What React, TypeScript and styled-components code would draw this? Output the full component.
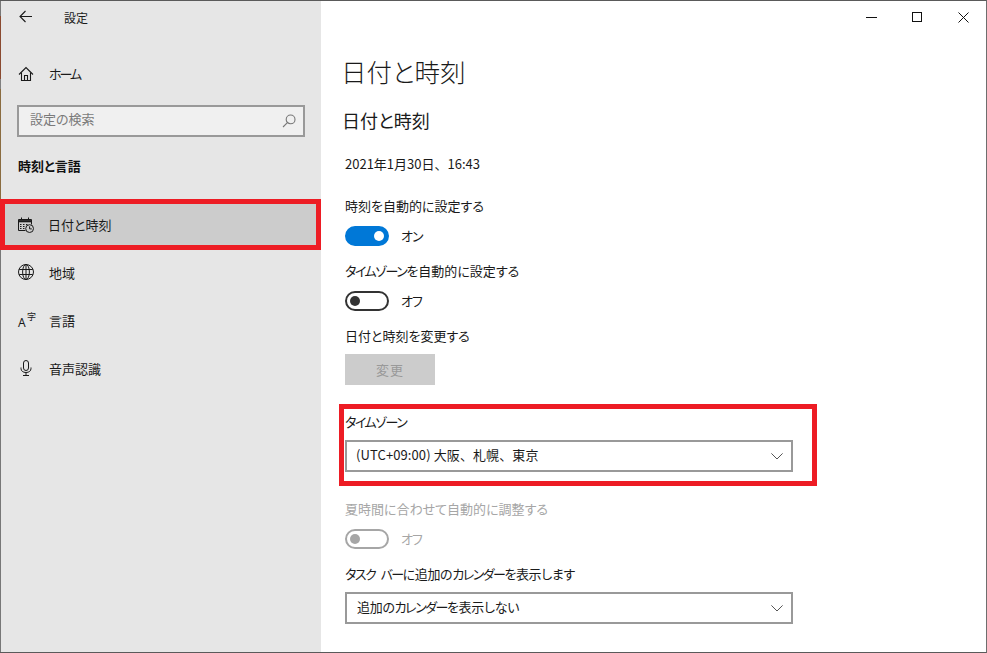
import React from 'react';
import styled, { createGlobalStyle } from 'styled-components';

const GlobalStyle = createGlobalStyle`
  html, body {
    margin: 0;
    padding: 0;
    background: #fff;
    overflow: hidden;
  }
  body {
    font-family: "Noto Sans CJK JP", "Noto Sans", sans-serif;
    font-feature-settings: "palt";
    color: #1a1a1a;
  }
`;

const Window = styled.div`
  width: 987px;
  height: 653px;
  box-sizing: border-box;
  display: flex;
  padding-left: 1px;
  border-top: 1px solid #5a5a5a;
  border-bottom: 1px solid #5a5a5a;
  border-right: 1px solid #6e6e6e;
  overflow: hidden;
  background: linear-gradient(
    #777 0 15px,
    #8a4a30 15px 78px,
    #808080 78px 88px,
    #8a6c40 88px 236px,
    #777 236px
  );
`;

const Sidebar = styled.aside`
  width: 320px;
  flex-shrink: 0;
  background: #e6e6e6;
  display: flex;
  flex-direction: column;
`;

const TitleBar = styled.div`
  height: 32px;
  display: flex;
  align-items: center;
  padding-left: 17px;
  font-size: 12px;
  svg { margin-right: 32px; }
`;

const HomeRow = styled.div`
  height: 48px;
  margin-top: 16px;
  display: flex;
  align-items: center;
  padding-left: 17px;
  font-size: 13px;
  letter-spacing: -2px;
  svg { margin: 2px 15px 0 0; }
`;

const SearchBox = styled.div`
  margin: 8px 16px 0 16px;
  height: 32px;
  box-sizing: border-box;
  border: 2px solid #999;
  background: #f0f0f0;
  display: flex;
  align-items: center;
  justify-content: space-between;
  padding: 0 7px 0 11px;
  font-size: 13px;
  color: #7a7a7a;
`;

const SearchText = styled.span`
  margin-top: -5px;
`;

const SectionName = styled.div`
  margin: 19px 0 0 17px;
  height: 20px;
  line-height: 20px;
  font-size: 13px;
  font-weight: 700;
  color: #111;
`;

const NavList = styled.nav`
  margin-top: 23px;
  display: flex;
  flex-direction: column;
`;

const NavRow = styled.div<{ $selected?: boolean }>`
  box-sizing: border-box;
  height: ${p => (p.$selected ? '51px' : '48px')};
  margin-left: ${p => (p.$selected ? '-1px' : '0')};
  margin-bottom: ${p => (p.$selected ? '-2px' : '0')};
  display: flex;
  align-items: center;
  font-size: 13px;
  padding-left: ${p => (p.$selected ? '13px' : '17px')};
  background: ${p => (p.$selected ? '#cccccc' : 'transparent')};
  border: ${p => (p.$selected ? '5px solid #ed1c24' : 'none')};
  flex-shrink: 0;
`;

const NavIcon = styled.span<{ $gap?: number }>`
  width: 16px;
  height: 16px;
  margin-right: ${p => p.$gap ?? 15}px;
  display: flex;
  align-items: center;
  justify-content: center;
`;

const LangIcon = styled.span`
  position: relative;
  width: 16px;
  height: 16px;
  display: block;
  & > b {
    position: absolute;
    left: 0;
    bottom: 0;
    font-weight: 400;
    font-family: "Noto Sans", sans-serif;
    font-size: 12px;
    line-height: 11px;
  }
  & > i {
    position: absolute;
    right: -2px;
    top: 0;
    font-style: normal;
    font-size: 9px;
    line-height: 9px;
  }
`;

const Main = styled.main`
  flex: 1;
  position: relative;
  background: #fff;
  padding-left: 24px;
  display: flex;
  flex-direction: column;
`;

const WindowButtons = styled.div`
  position: absolute;
  top: 0;
  right: 0;
  height: 32px;
  display: flex;
`;

const WindowButton = styled.div`
  width: 46px;
  height: 32px;
  display: flex;
  align-items: center;
  justify-content: center;
  color: #111;
`;

const PageTitle = styled.h1`
  margin: 50px 0 0 -4px;
  height: 40px;
  line-height: 40px;
  font-size: 25.5px;
  font-weight: 300;
`;

const SubTitle = styled.h2`
  margin: 14px 0 0 -3px;
  height: 30px;
  line-height: 30px;
  font-size: 18px;
  font-weight: 400;
`;

const Line = styled.div<{ $top: number; $muted?: boolean; $plain?: boolean; $tight?: boolean }>`
  margin-top: ${p => p.$top}px;
  height: 20px;
  line-height: 20px;
  font-size: 13px;
  color: ${p => (p.$muted ? '#a6a6a6' : '#1a1a1a')};
  white-space: nowrap;
  ${p => (p.$plain ? 'font-feature-settings: normal;' : '')}
  ${p => (p.$tight ? 'letter-spacing: -0.4px; word-spacing: 4px;' : '')}
`;

// katakana is set much narrower in the original than in the fallback font
const Kana = styled.span`
  letter-spacing: -1.5px;
`;

const ToggleRow = styled.div<{ $top: number }>`
  margin-top: ${p => p.$top}px;
  display: flex;
  align-items: center;
  gap: 12px;
  height: 20px;
`;

const Track = styled.div<{ $on?: boolean; $disabled?: boolean }>`
  position: relative;
  width: 44px;
  height: 20px;
  box-sizing: border-box;
  border-radius: 10px;
  background: ${p => (p.$on ? '#0078d7' : 'transparent')};
  border: 2px solid ${p => (p.$on ? '#0078d7' : p.$disabled ? '#a6a6a6' : '#333')};
  &::after {
    content: '';
    position: absolute;
    top: 3px;
    width: 10px;
    height: 10px;
    border-radius: 50%;
    ${p => (p.$on ? 'right: 3px;' : 'left: 3px;')}
    background: ${p => (p.$on ? '#fff' : p.$disabled ? '#a6a6a6' : '#333')};
  }
`;

const ToggleLabel = styled.span<{ $muted?: boolean }>`
  font-size: 13px;
  letter-spacing: -1px;
  margin-top: -2px;
  color: ${p => (p.$muted ? '#a6a6a6' : '#1a1a1a')};
`;

const ChangeButton = styled.div`
  margin-top: 8px;
  width: 90px;
  height: 31px;
  background: #cccccc;
  color: #999;
  font-size: 13px;
  letter-spacing: 1px;
  display: flex;
  align-items: center;
  justify-content: center;
`;

const Highlight = styled.section`
  margin: 19px 0 0 -6px;
  width: 478px;
  height: 82px;
  box-sizing: border-box;
  border: 5px solid #ed1c24;
  padding: 3px 0 0 1px;
  flex-shrink: 0;
`;

const FieldLabel = styled.div`
  height: 20px;
  line-height: 20px;
  font-size: 13px;
`;

const Select = styled.div<{ $top: number; $plain?: boolean }>`
  margin-top: ${p => p.$top}px;
  width: 448px;
  height: 32px;
  box-sizing: border-box;
  border: 2px solid #999;
  background: #fff;
  display: flex;
  align-items: center;
  justify-content: space-between;
  padding: 0 8px 0 ${p => (p.$plain ? 9 : 10)}px;
  font-size: 13px;
  flex-shrink: 0;
  ${p => (p.$plain ? 'font-feature-settings: normal; letter-spacing: 0.1px;' : 'letter-spacing: -0.3px;')}
`;

const SelectText = styled.span`
  margin-top: -4px;
`;

const BackIcon = () => (
  <svg width="14" height="14" viewBox="0 0 14 14" fill="none" stroke="#1a1a1a" strokeWidth="1.1">
    <path d="M2 6.5H14M7.5 1L2 6.5L7.5 12" />
  </svg>
);

const HomeIcon = () => (
  <svg width="16" height="16" viewBox="0 0 16 16" fill="none" stroke="#1a1a1a" strokeWidth="1.1">
    <path d="M1 8.5L8 1.5L15 8.5" />
    <path d="M3.5 6.5V14.5H12.5V6.5" />
    <path d="M6.5 14.5V9.5H9.5V14.5" />
  </svg>
);

const SearchIcon = () => (
  <svg width="14" height="14" viewBox="0 0 14 14" fill="none" stroke="#777" strokeWidth="1.1">
    <circle cx="8.6" cy="5.4" r="4.4" />
    <path d="M5.4 8.6L1 13" />
  </svg>
);

const CalendarClockIcon = () => (
  <svg width="16" height="16" viewBox="0 0 16 16" fill="none" stroke="#1a1a1a" strokeWidth="1">
    <path d="M7.5 13.5H0.5V2.5H13.5V7.5" />
    <path d="M1 4.2H13" strokeWidth="2.2" />
    <path d="M3.5 0.5V2.5M10.5 0.5V2.5" />
    <path d="M2 7.5H3.5M5 7.5H6.5M8 7.5H9.5M2 9.5H3.5M5 9.5H6.5M2 11.5H3.5M5 11.5H6.5" />
    <circle cx="11.6" cy="11.6" r="3.9" fill="#ccc" />
    <path d="M11.6 9.3V11.9H13.8" />
  </svg>
);

const GlobeIcon = () => (
  <svg width="16" height="16" viewBox="0 0 16 16" fill="none" stroke="#1a1a1a" strokeWidth="1">
    <circle cx="8" cy="8" r="7.5" />
    <ellipse cx="8" cy="8" rx="3.4" ry="7.5" />
    <path d="M8 0.5V15.5M1.2 5.5H14.8M1.2 10.5H14.8" />
  </svg>
);

const MicIcon = () => (
  <svg width="16" height="16" viewBox="0 0 16 16" fill="none" stroke="#1a1a1a" strokeWidth="1">
    <rect x="5.5" y="0.5" width="5" height="10" rx="2.5" />
    <path d="M3 7.5V8.5C3 11 5 12.5 8 12.5C11 12.5 13 11 13 8.5V7.5" />
    <path d="M8 12.5V15.5M5 15.5H11" />
  </svg>
);

const MinimizeIcon = () => (
  <svg width="11" height="11" viewBox="0 0 11 11" fill="none" stroke="#111" strokeWidth="1">
    <path d="M0 5.5H11" />
  </svg>
);

const MaximizeIcon = () => (
  <svg width="11" height="11" viewBox="0 0 11 11" fill="none" stroke="#111" strokeWidth="1">
    <rect x="0.5" y="0.5" width="9" height="9" />
  </svg>
);

const CloseIcon = () => (
  <svg width="11" height="11" viewBox="0 0 11 11" fill="none" stroke="#111" strokeWidth="1">
    <path d="M0.5 0.5L10.5 10.5M10.5 0.5L0.5 10.5" />
  </svg>
);

const ChevronIcon = () => (
  <svg width="12" height="7" viewBox="0 0 12 7" fill="none" stroke="#555" strokeWidth="1">
    <path d="M0.4 0.4L6 6L11.6 0.4" />
  </svg>
);

const App: React.FC = () => (
  <>
    <GlobalStyle />
    <Window>
      <Sidebar>
        <TitleBar>
          <BackIcon />
          設定
        </TitleBar>
        <HomeRow>
          <HomeIcon />
          ホーム
        </HomeRow>
        <SearchBox>
          <SearchText>設定の検索</SearchText>
          <SearchIcon />
        </SearchBox>
        <SectionName>時刻と言語</SectionName>
        <NavList>
          <NavRow $selected>
            <NavIcon $gap={14}><CalendarClockIcon /></NavIcon>
            日付と時刻
          </NavRow>
          <NavRow>
            <NavIcon><GlobeIcon /></NavIcon>
            地域
          </NavRow>
          <NavRow>
            <NavIcon>
              <LangIcon><b>A</b><i>字</i></LangIcon>
            </NavIcon>
            言語
          </NavRow>
          <NavRow>
            <NavIcon><MicIcon /></NavIcon>
            音声認識
          </NavRow>
        </NavList>
      </Sidebar>
      <Main>
        <WindowButtons>
          <WindowButton><MinimizeIcon /></WindowButton>
          <WindowButton><MaximizeIcon /></WindowButton>
          <WindowButton><CloseIcon /></WindowButton>
        </WindowButtons>
        <PageTitle>日付と時刻</PageTitle>
        <SubTitle>日付と時刻</SubTitle>
        <Line $top={19} $plain>2021年1月30日、16:43</Line>
        <Line $top={22}>時刻を自動的に設定する</Line>
        <ToggleRow $top={10}>
          <Track $on />
          <ToggleLabel>オン</ToggleLabel>
        </ToggleRow>
        <Line $top={15}><Kana>タイムゾーン</Kana>を自動的に設定する</Line>
        <ToggleRow $top={10}>
          <Track />
          <ToggleLabel>オフ</ToggleLabel>
        </ToggleRow>
        <Line $top={15}>日付と時刻を変更する</Line>
        <ChangeButton>変更</ChangeButton>
        <Highlight>
          <FieldLabel><Kana>タイムゾーン</Kana></FieldLabel>
          <Select $top={8} $plain>
            <SelectText>(UTC+09:00) 大阪、札幌、東京</SelectText>
            <ChevronIcon />
          </Select>
        </Highlight>
        <Line $top={13} $muted>夏時間に合わせて自動的に調整する</Line>
        <ToggleRow $top={10}>
          <Track $disabled />
          <ToggleLabel $muted>オフ</ToggleLabel>
        </ToggleRow>
        <Line $top={15} $tight><Kana>タスク バー</Kana>に追加の<Kana>カレンダー</Kana>を表示します</Line>
        <Select $top={8}>
          <SelectText>追加の<Kana>カレンダー</Kana>を表示しない</SelectText>
          <ChevronIcon />
        </Select>
      </Main>
    </Window>
  </>
);

export default App;
